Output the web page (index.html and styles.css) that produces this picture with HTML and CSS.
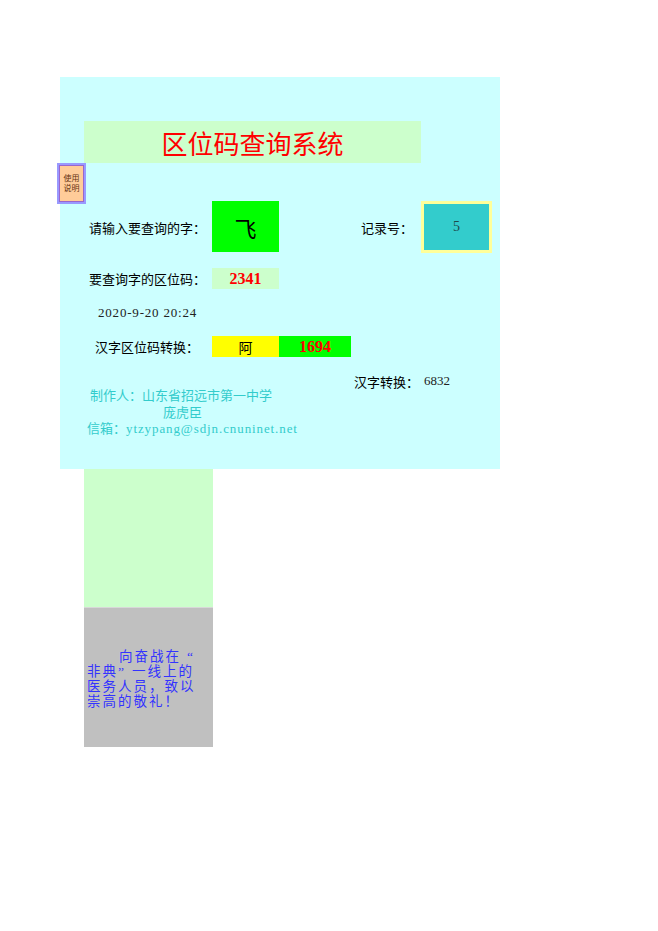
FILE: index.html
```html
<!DOCTYPE html>
<html lang="zh">
<head>
<meta charset="utf-8">
<title>区位码查询系统</title>
<link rel="stylesheet" href="styles.css">
</head>
<body>
<div class="panel">
  <div class="help-btn"><div class="help-inner"><div class="hl">使用</div><div class="hl">说明</div></div></div>
  <div class="title">区位码查询系统</div>
  <div class="row row1">
    <div class="label l1">请输入要查询的字：</div>
    <div class="char-box">飞</div>
    <div class="rec-label">记录号：</div>
    <div class="rec-box">5</div>
  </div>
  <div class="row row2">
    <div class="label l1">要查询字的区位码：</div>
    <div class="code-box">2341</div>
  </div>
  <div class="row date-row">2020-9-20 20:24</div>
  <div class="row row4">
    <div class="label l4">汉字区位码转换：</div>
    <div class="yellow-box">阿</div>
    <div class="green-code">1694</div>
  </div>
  <div class="row row5">汉字转换：<span class="num">6832</span></div>
  <div class="credits">
    <div class="c1">制作人：山东省招远市第一中学</div>
    <div class="c2">庞虎臣</div>
    <div class="c3">信箱：<span class="email">ytzypang@sdjn.cnuninet.net</span></div>
  </div>
</div>
<div class="column">
  <div class="col-green"></div>
  <div class="col-gray">
    <div class="salute">
      <div class="line first">向奋战在<span class="ql">“</span></div>
      <div class="line">非典<span class="qr">”</span>一线上的</div>
      <div class="line">医务人员，致以</div>
      <div class="line">崇高的敬礼！</div>
    </div>
  </div>
</div>
</body>
</html>
```

FILE: styles.css
```css
html, body {
  margin: 0;
  padding: 0;
  background: #ffffff;
}
body {
  font-family: "Liberation Serif", "Noto Sans CJK SC", serif;
  font-size: 13px;
  color: #000000;
}
.panel {
  position: relative;
  width: 440px;
  height: 392px;
  margin: 77px 0 0 60px;
  padding-top: 44px;
  box-sizing: border-box;
  background: #ccffff;
}
.help-btn {
  position: absolute;
  left: -3px;
  top: 86px;
  width: 29px;
  height: 41px;
  box-sizing: border-box;
  border: 2px solid #9999ff;
  background: #ccccff;
}
.help-inner {
  width: 100%;
  height: 100%;
  box-sizing: border-box;
  border: 1px solid #9966cc;
  background: #ffcc99;
  color: #663311;
  font-family: "Liberation Serif", "Noto Sans CJK SC", serif;
  font-size: 8px;
  text-align: center;
  padding-top: 8px;
}
.hl {
  height: 10px;
  line-height: 10px;
}
.title {
  margin-left: 24px;
  width: 337px;
  height: 42px;
  background: #ccffcc;
  color: #ff0000;
  font-family: "Noto Sans CJK SC", sans-serif;
  font-size: 26px;
  display: flex;
  align-items: center;
  justify-content: center;
}
.row {
  display: flex;
  align-items: center;
}
.label {
  font-family: "Noto Sans CJK SC", sans-serif;
  font-size: 13px;
  box-sizing: border-box;
  width: 152px;
}
.l1 { padding-left: 29px; }
.l4 { padding-left: 35px; }
.row1 {
  margin-top: 38px;
  height: 52px;
}
.char-box {
  width: 67px;
  height: 51px;
  background: #00ff00;
  display: flex;
  align-items: center;
  justify-content: center;
  font-family: "Noto Sans CJK SC", sans-serif;
  font-size: 22px;
  color: #000000;
  margin-bottom: 1px;
}
.rec-label {
  margin-left: 82px;
  width: 60px;
  font-family: "Noto Sans CJK SC", sans-serif;
}
.rec-box {
  width: 71px;
  height: 52px;
  box-sizing: border-box;
  border: 3px solid #ffff99;
  background: #33cccc;
  display: flex;
  align-items: center;
  justify-content: center;
  color: #1e4a4a;
  font-size: 14px;
}
.row2 {
  margin-top: 15px;
  height: 21px;
}
.code-box {
  width: 67px;
  height: 21px;
  background: #ccffcc;
  color: #ff0000;
  font-size: 16px;
  font-weight: bold;
  display: flex;
  align-items: center;
  justify-content: center;
}
.date-row {
  margin-top: 13px;
  height: 21px;
  padding-left: 38px;
  color: #222222;
  letter-spacing: 0.8px;
}
.row4 {
  margin-top: 13px;
  height: 21px;
}
.yellow-box {
  width: 67px;
  height: 21px;
  background: #ffff00;
  display: flex;
  align-items: center;
  justify-content: center;
  font-family: "Noto Sans CJK SC", sans-serif;
  font-size: 14px;
}
.green-code {
  width: 72px;
  height: 21px;
  background: #00ff00;
  color: #ff0000;
  font-size: 16px;
  font-weight: bold;
  display: flex;
  align-items: center;
  justify-content: center;
}
.row5 {
  margin-top: 17px;
  height: 14px;
  padding-left: 294px;
  font-family: "Noto Sans CJK SC", sans-serif;
}
.num {
  font-family: "Liberation Serif", serif;
  margin-left: 5px;
  color: #222222;
}
.credits {
  color: #33cccc;
  font-family: "Liberation Serif", "Noto Sans CJK SC", serif;
  font-size: 13px;
}
.c1, .c2, .c3 {
  height: 16.5px;
  line-height: 16.5px;
}
.c1 { padding-left: 30px; }
.c2 { padding-left: 103px; }
.c3 { padding-left: 27px; }
.email {
  font-size: 13px;
  letter-spacing: 0.9px;
}
.column {
  margin-left: 84px;
  width: 129px;
}
.col-green {
  height: 138px;
  background: #ccffcc;
}
.col-gray {
  height: 140px;
  background: #c0c0c0;
  border-top: 1px solid #d8d8d8;
  box-sizing: border-box;
  padding: 41px 0 0 3px;
}
.salute {
  color: #3333ff;
  font-family: "Liberation Serif", "Noto Sans CJK SC", serif;
  font-size: 13.5px;
  letter-spacing: 2px;
  white-space: nowrap;
}
.line {
  height: 15px;
  line-height: 15px;
}
.first {
  padding-left: 32px;
}
.ql {
  padding-left: 6px;
}
.qr {
  padding-right: 6px;
}
```
